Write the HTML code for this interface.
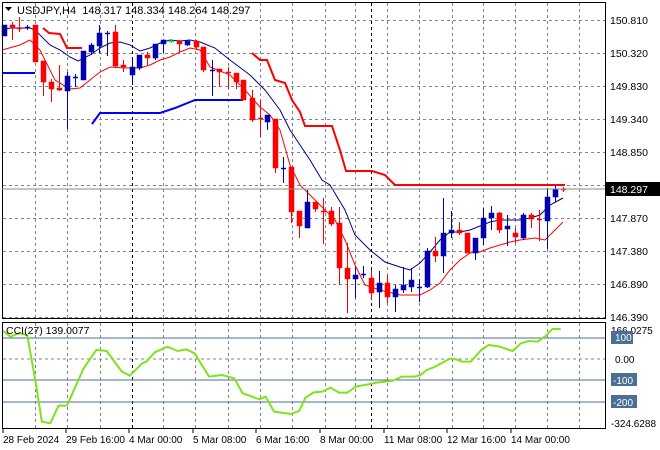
<!DOCTYPE html>
<html><head><meta charset="utf-8"><style>
html,body{margin:0;padding:0;background:#fff;}
svg{display:block;font-family:"Liberation Sans",sans-serif;}
</style></head><body>
<svg id="s" width="660" height="450" viewBox="0 0 660 450" xmlns="http://www.w3.org/2000/svg">
<rect width="660" height="450" fill="#fff"/>
<g id="grid" stroke="#7a8590" stroke-width="1" stroke-dasharray="3,3" fill="none"></g>
<g id="lines" fill="none"></g>
<g id="candles"></g>
<g stroke="#4a6f94" stroke-width="1">
<line x1="3" y1="338" x2="605" y2="338"/>
<line x1="3" y1="380" x2="605" y2="380"/>
<line x1="3" y1="402" x2="605" y2="402"/>
</g>
<line x1="3" y1="359" x2="605" y2="359" stroke="#7a8590" stroke-dasharray="3,3"/>
<g transform="translate(0,315) scale(0.4184,0.3333)">
<polyline fill="none" stroke="#7fe31c" stroke-width="2" vector-effect="non-scaling-stroke" stroke-linejoin="round" points="8,48 25,65 45,55 65,60 85,200 100,320 120,325 140,272 160,272 200,160 230,105 255,108 290,168 310,182 340,145 350,140 370,112 400,95 425,108 445,103 465,115 500,185 530,180 560,190 580,235 620,253 635,245 655,290 695,297 715,288 730,248 750,232 770,230 790,218 810,233 830,233 850,215 880,208 900,203 920,200 940,197 960,185 990,185 1005,180 1020,165 1040,155 1075,131 1090,133 1105,140 1125,140 1150,105 1168,90 1195,95 1225,108 1245,85 1265,78 1285,80 1305,62 1320,42 1340,42"/>
</g>
<rect x="2.5" y="2.5" width="603" height="316" fill="none" stroke="#000"/>
<rect x="2.5" y="322.5" width="603" height="106" fill="none" stroke="#000"/>
<line x1="2" y1="189" x2="605" y2="189" stroke="#888"/>
<polygon points="5,7 12,7 8.5,11" fill="#000"/>
<text x="17" y="14" font-size="11" fill="#000" xml:space="preserve">USDJPY,H4  148.317 148.334 148.264 148.297</text>
<text x="6" y="334" font-size="10.5" fill="#000">CCI(27) 139.0077</text>
<g font-size="10.5" fill="#000">
<text x="610" y="24">150.810</text>
<text x="610" y="57">150.320</text>
<text x="610" y="90">149.830</text>
<text x="610" y="123">149.340</text>
<text x="610" y="156">148.850</text>
<text x="610" y="189">148.360</text>
<text x="610" y="222">147.870</text>
<text x="610" y="255">147.380</text>
<text x="610" y="288">146.890</text>
<text x="610" y="321">146.390</text>
</g>
<rect x="606" y="182" width="54" height="14" fill="#000"/>
<text x="610" y="193" font-size="10.5" fill="#fff">148.297</text>
<g font-size="10" fill="#000">
<text x="611" y="334">166.0275</text>
<rect x="611" y="331" width="22" height="13" fill="#4a6f94"/><text x="615" y="341" fill="#fff">100</text>
<text x="615" y="363">0.00</text>
<rect x="611" y="373" width="26" height="13" fill="#4a6f94"/><text x="613" y="384" fill="#fff">-100</text>
<rect x="611" y="395" width="26" height="13" fill="#4a6f94"/><text x="613" y="406" fill="#fff">-200</text>
<text x="611" y="427">-324.6288</text>
</g>
<g font-size="10" fill="#000">
<text x="3" y="443">28 Feb 2024</text>
<text x="66" y="443">29 Feb 16:00</text>
<text x="129" y="443">4 Mar 00:00</text>
<text x="193" y="443">5 Mar 08:00</text>
<text x="256" y="443">6 Mar 16:00</text>
<text x="320" y="443">8 Mar 00:00</text>
<text x="384" y="443">11 Mar 08:00</text>
<text x="447" y="443">12 Mar 16:00</text>
<text x="511" y="443">14 Mar 00:00</text>
</g>
<g stroke="#000"><line x1="3" y1="429" x2="3" y2="433"/><line x1="66" y1="429" x2="66" y2="433"/><line x1="129" y1="429" x2="129" y2="433"/><line x1="193" y1="429" x2="193" y2="433"/><line x1="256" y1="429" x2="256" y2="433"/><line x1="320" y1="429" x2="320" y2="433"/><line x1="384" y1="429" x2="384" y2="433"/><line x1="447" y1="429" x2="447" y2="433"/><line x1="511" y1="429" x2="511" y2="433"/></g>
</svg>
<script>
var NS="http://www.w3.org/2000/svg";
function el(p,t,a){var e=document.createElementNS(NS,t);for(var k in a)e.setAttribute(k,a[k]);p.appendChild(e);return e;}
var g=document.getElementById('grid');
[20,53,86,119,152,185,218,251,284,317].forEach(function(y){el(g,'line',{x1:3,y1:y+.5,x2:605,y2:y+.5});});
[35,67,100,163,195,228,260,292,325,355,387,419,452,483,515,547,579].forEach(function(x){
 el(g,'line',{x1:x+.5,y1:3,x2:x+.5,y2:318});el(g,'line',{x1:x+.5,y1:323,x2:x+.5,y2:428});});
[132,371].forEach(function(x){el(g,'line',{x1:x+.5,y1:3,x2:x+.5,y2:318,stroke:'#000'});el(g,'line',{x1:x+.5,y1:323,x2:x+.5,y2:428,stroke:'#000'});});
var L=document.getElementById('lines');
function pl(pts,c,w){el(L,'polyline',{points:pts,stroke:c,'stroke-width':w,fill:'none'});}
pl("2,50 20,45 30,40 40,50 55,80 70,89 80,88 90,80 100,72 110,67 125,68 140,68 150,65 160,60 170,57 180,52 190,48 200,50 210,67 230,75 245,90 260,107 270,115 280,130 290,165 300,185 320,205 335,220 345,240 355,265 365,285 380,290 400,295 420,295 430,290 440,283 450,270 460,260 470,253 480,252 490,248 500,245 510,242 520,240 535,238 545,240 555,230 563,222","#f00",1);
pl("2,30 10,28 30,28 35,30 50,45 60,50 70,57 78,61 90,55 100,48 110,43 120,42 130,45 140,51 150,48 160,43 170,40 180,41 190,40 200,42 215,48 230,60 250,75 265,90 280,110 290,130 300,145 310,160 322,180 330,185 345,210 355,235 370,250 385,262 400,267 410,270 420,263 430,252 440,240 450,232 460,232 470,230 480,226 490,222 500,220 510,220 520,220 530,218 540,215 550,205 563,198","#00008b",1);
pl("43,28 49,33 60,34 67,48 82,48","#f00",2);
pl("252,53 260,60 267,60 275,80 285,83 292,100 300,112 305,126 332,126 340,150 346,171 372,171 385,175 395,185 565,185","#f00",2);
pl("2,73 35,73","#0000ff",2);
pl("92,124 100,113 160,113 175,108 195,100 243,100","#0000ff",2);
var C=document.getElementById('candles');
var d=[[4,25,36,25,36,'b'],[12,25,27,22,40,'r'],[19,28,28,17,32,'r'],[27,27,27,25,30,'b'],[35,25,62,25,62,'r'],[43,61,82,61,96,'r'],[51,82,89,79,102,'r'],[59,88,90,65,91,'r'],[67,76,91,72,129,'b'],[75,77,77,74,87,'b'],[83,51,80,51,80,'b'],[91,45,52,43,55,'b'],[99,33,46,25,53,'b'],[107,33,33,31,56,'b'],[115,32,66,25,68,'r'],[123,65,67,60,72,'r'],[132,67,75,60,85,'b'],[139,55,68,55,70,'b'],[147,55,58,52,65,'r'],[155,44,58,44,60,'b'],[163,40,44,40,53,'b'],[171,41,41,39,43,'g'],[179,41,44,40,52,'r'],[187,41,45,40,46,'b'],[196,41,47,40,50,'r'],[203,47,70,47,72,'r'],[212,70,70,60,96,'b'],[219,69,72,69,87,'r'],[228,72,72,67,89,'r'],[236,73,82,73,89,'r'],[243,80,100,80,100,'r'],[252,98,120,90,122,'r'],[260,118,118,100,137,'r'],[267,115,122,115,130,'b'],[275,119,168,119,173,'r'],[283,168,168,157,183,'b'],[291,167,212,167,223,'r'],[299,211,226,211,238,'r'],[307,202,228,190,228,'b'],[315,202,209,202,212,'r'],[323,211,211,198,244,'r'],[331,211,224,207,226,'r'],[339,223,268,207,285,'r'],[347,268,279,243,313,'r'],[355,275,279,267,298,'b'],[363,274,274,266,278,'b'],[371,278,293,270,300,'r'],[379,283,292,271,308,'b'],[387,283,297,275,303,'r'],[395,289,297,285,312,'b'],[403,285,290,267,293,'b'],[411,280,287,268,292,'b'],[419,287,287,279,302,'b'],[427,251,287,248,288,'b'],[435,251,256,237,262,'r'],[443,233,256,198,273,'b'],[451,230,233,211,238,'b'],[459,230,233,222,235,'r'],[467,233,253,233,253,'r'],[475,238,253,238,260,'b'],[483,218,238,208,245,'b'],[491,213,218,206,230,'b'],[499,213,230,212,233,'r'],[507,226,229,215,246,'b'],[515,233,237,228,243,'r'],[523,215,238,213,240,'b'],[531,215,219,213,228,'r'],[539,219,219,210,241,'r'],[547,197,221,188,249,'b'],[555,189,197,185,202,'b'],[563,189,189,187,192,'r']];
d.forEach(function(c){var col=c[5]=='r'?'#f00':(c[5]=='g'?'#0f0':'#0000b4');
 el(C,'line',{x1:c[0]+.5,y1:c[3],x2:c[0]+.5,y2:c[4],stroke:col,'stroke-width':1});
 var h=c[2]-c[1];
 if(h<2){el(C,'line',{x1:c[0]-2,y1:c[1]+.5,x2:c[0]+3,y2:c[1]+.5,stroke:col,'stroke-width':1.5});}
 else el(C,'rect',{x:c[0]-2,y:c[1],width:5,height:h,fill:col,stroke:c[5]=='b'?'#00008b':col,'stroke-width':.5});});
</script>
</body></html>
